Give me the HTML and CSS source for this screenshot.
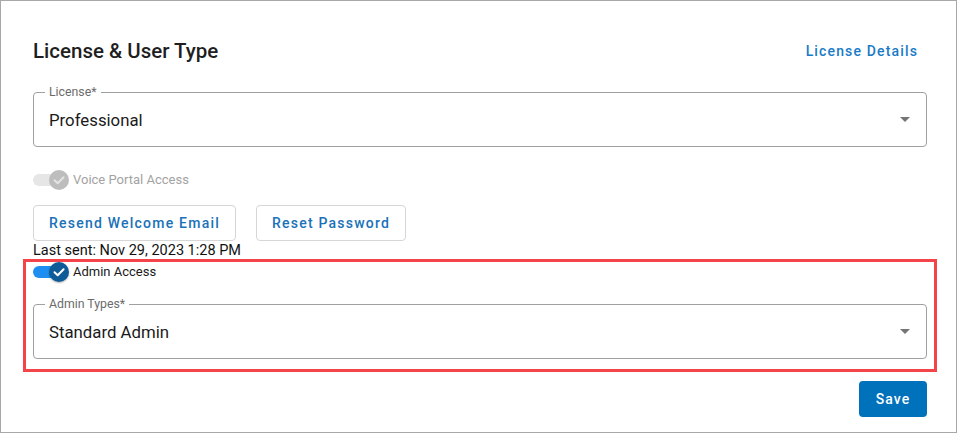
FILE: index.html
```html
<!DOCTYPE html>
<html lang="en">
<head>
<meta charset="utf-8">
<title>License &amp; User Type</title>
<link rel="stylesheet" href="styles.css">
</head>
<body>
<div class="panel">
  <div class="header">
    <h2 class="title">License &amp; User Type</h2>
    <a class="link-btn" href="#">License Details</a>
  </div>

  <div class="field field-license">
    <span class="field-label">License*</span>
    <span class="field-value">Professional</span>
    <span class="arrow"></span>
  </div>

  <div class="toggle-row toggle-voice">
    <span class="switch disabled">
      <span class="track"></span>
      <span class="thumb">
        <svg viewBox="0 0 20 20" width="20" height="20"><path d="M5.5 10.2 L8.7 13.3 L14.6 7.2" fill="none" stroke-width="2" stroke-linecap="round" stroke-linejoin="round"/></svg>
      </span>
    </span>
    <span class="toggle-label">Voice Portal Access</span>
  </div>

  <div class="btn-row">
    <button class="btn-outline">Resend Welcome Email</button>
    <button class="btn-outline">Reset Password</button>
  </div>
  <div class="last-sent">Last sent: Nov 29, 2023 1:28 PM</div>

  <div class="admin-section">
    <div class="toggle-row toggle-admin">
      <span class="switch on">
        <span class="track"></span>
        <span class="thumb">
          <svg viewBox="0 0 20 20" width="20" height="20"><path d="M5.5 10.2 L8.7 13.3 L14.6 7.2" fill="none" stroke-width="2" stroke-linecap="round" stroke-linejoin="round"/></svg>
        </span>
      </span>
      <span class="toggle-label">Admin Access</span>
    </div>

    <div class="field field-admin">
      <span class="field-label">Admin Types*</span>
      <span class="field-value">Standard Admin</span>
      <span class="arrow"></span>
    </div>
    <div class="highlight"></div>
  </div>

  <div class="actions">
    <button class="btn-primary">Save</button>
  </div>
</div>
</body>
</html>
```

FILE: styles.css
```css
* { box-sizing: border-box; }

html, body {
  margin: 0;
  padding: 0;
  background: #ffffff;
}

body {
  font-family: Roboto, "Liberation Sans", Arial, sans-serif;
  color: #1a1a1a;
}

.panel {
  width: 957px;
  height: 433px;
  border: 1px solid #a8a8a8;
  padding: 36px 29px 0 32px;
  display: flex;
  flex-direction: column;
}

.header {
  display: flex;
  justify-content: space-between;
  align-items: center;
  height: 28px;
}

.title {
  margin: 0;
  font-size: 20.5px;
  line-height: 28px;
  font-weight: 500;
  color: #1f1f1f;
}

.link-btn {
  font-size: 14px;
  font-weight: 500;
  letter-spacing: 1.15px;
  color: #1a7bc6;
  text-decoration: none;
  padding: 0 9px 0 8px;
  line-height: 28px;
}

.field {
  position: relative;
  height: 55px;
  border: 1px solid #a0a0a0;
  border-radius: 4px;
  display: flex;
  align-items: center;
  padding: 0 16px 0 15px;
}

.field-license { margin-top: 27px; }

.field-label {
  position: absolute;
  top: -8px;
  left: 11px;
  padding: 0 4px;
  background: #ffffff;
  font-size: 12.3px;
  line-height: 14px;
  color: #6b6b6b;
}

.field-value {
  flex: 1;
  font-size: 16.8px;
  line-height: 20px;
  color: #1a1a1a;
}

.arrow {
  width: 0;
  height: 0;
  border-left: 5px solid transparent;
  border-right: 5px solid transparent;
  border-top: 5px solid #757575;
}

.toggle-row {
  display: flex;
  align-items: center;
  height: 20px;
}

.toggle-voice { margin-top: 23px; }

.switch {
  position: relative;
  width: 36px;
  height: 20px;
  flex: none;
}

.track {
  position: absolute;
  left: 0;
  top: 4px;
  width: 30px;
  height: 12px;
  border-radius: 6px;
}

.thumb {
  position: absolute;
  left: 16px;
  top: 0;
  width: 20px;
  height: 20px;
  border-radius: 50%;
  display: block;
}

.thumb svg { display: block; }

.switch.disabled .track { background: #e6e6e6; }
.switch.disabled .thumb { background: #bdbdbd; }
.switch.disabled path { stroke: #e3e3e3; }

.switch.on .track { background: #1e8ff0; }
.switch.on .thumb {
  background: #0e5b98;
  box-shadow: 0 1px 2px rgba(0, 0, 0, 0.3);
}
.switch.on path { stroke: #ffffff; }

.toggle-label {
  margin-left: 4px;
  font-size: 13px;
  line-height: 20px;
}

.toggle-voice .toggle-label { color: #a3a3a3; }
.toggle-admin .toggle-label { color: #1a1a1a; }

.btn-row {
  display: flex;
  gap: 20px;
  margin-top: 15px;
}

button {
  font-family: Roboto, "Liberation Sans", Arial, sans-serif;
  cursor: pointer;
}

.btn-outline {
  height: 36px;
  padding: 0 15px;
  background: #ffffff;
  border: 1px solid #d6d6d6;
  border-radius: 4px;
  font-size: 14px;
  font-weight: 500;
  letter-spacing: 1.22px;
  color: #1a72b8;
}

.last-sent {
  font-size: 14.5px;
  line-height: 20px;
  color: #111111;
}

.admin-section {
  position: relative;
  margin-top: 1px;
}

.field-admin { margin-top: 22px; }

.highlight {
  position: absolute;
  left: -10px;
  right: -10px;
  top: -3px;
  bottom: -13px;
  border: 3px solid #f4444a;
  pointer-events: none;
}

.actions {
  display: flex;
  justify-content: flex-end;
  margin-top: 22px;
}

.btn-primary {
  height: 36px;
  width: 68px;
  background: #0071bb;
  color: #ffffff;
  border: none;
  border-radius: 4px;
  font-size: 14px;
  font-weight: 500;
  letter-spacing: 1px;
}
```
